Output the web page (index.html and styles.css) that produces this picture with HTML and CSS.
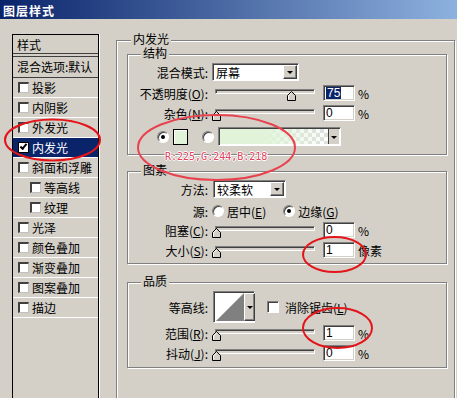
FILE: index.html
```html
<!DOCTYPE html>
<html lang="zh-CN">
<head>
    <meta charset="UTF-8">
    <meta name="viewport" content="width=device-width, initial-scale=1.0">
    <title>图层样式</title>
    <link rel="stylesheet" href="styles.css">
</head>
<body>
<div class="dialog">
    <div class="titlebar">图层样式</div>

    <div class="main">
        <!-- lista de estilos -->
        <div class="style-list">
            <div class="list-head">样式</div>
            <div class="list-blend">混合选项:默认</div>
            <div class="list-item"><span class="chk"></span>投影</div>
            <div class="list-item"><span class="chk"></span>内阴影</div>
            <div class="list-item"><span class="chk"></span>外发光</div>
            <div class="list-item selected"><span class="chk checked"></span>内发光</div>
            <div class="list-item"><span class="chk"></span>斜面和浮雕</div>
            <div class="list-item sub"><span class="chk"></span>等高线</div>
            <div class="list-item sub"><span class="chk"></span>纹理</div>
            <div class="list-item"><span class="chk"></span>光泽</div>
            <div class="list-item"><span class="chk"></span>颜色叠加</div>
            <div class="list-item"><span class="chk"></span>渐变叠加</div>
            <div class="list-item"><span class="chk"></span>图案叠加</div>
            <div class="list-item"><span class="chk"></span>描边</div>
        </div>

        <div class="group outer">
            <span class="group-label">内发光</span>

            <!-- 结构 -->
            <div class="group inner g-struct">
                <span class="group-label">结构</span>
                <div class="row tall first">
                    <label class="lbl">混合模式:</label>
                    <div class="select blend">
                        <span class="select-text">屏幕</span>
                        <span class="drop"></span>
                    </div>
                </div>
                <div class="row">
                    <label class="lbl">不透明度(<u>O</u>):</label>
                    <div class="slider">
                        <div class="track"></div>
                        <svg class="thumb" style="left:75px" width="9" height="10" viewBox="0 0 9 10"><path d="M0.5 9.5V4.5L4.5 0.5L8.5 4.5V9.5Z" fill="#d4d0c8" stroke="#000"/><path d="M1.5 8.5V4.9L4.5 1.9" fill="none" stroke="#fff"/></svg>
                    </div>
                    <div class="num"><span class="sel">75</span></div>
                    <span class="unit">%</span>
                </div>
                <div class="row">
                    <label class="lbl">杂色(<u>N</u>):</label>
                    <div class="slider">
                        <div class="track"></div>
                        <svg class="thumb" style="left:0px" width="9" height="10" viewBox="0 0 9 10"><path d="M0.5 9.5V4.5L4.5 0.5L8.5 4.5V9.5Z" fill="#d4d0c8" stroke="#000"/><path d="M1.5 8.5V4.9L4.5 1.9" fill="none" stroke="#fff"/></svg>
                    </div>
                    <div class="num">0</div>
                    <span class="unit">%</span>
                </div>
                <div class="row color-row">
                    <span class="radio on"></span>
                    <span class="swatch"></span>
                    <span class="radio gap"></span>
                    <div class="gradient">
                        <span class="gradient-fill"></span>
                        <span class="drop flat"></span>
                    </div>
                </div>
            </div>

            <!-- 图素 -->
            <div class="group inner g-elem">
                <span class="group-label">图素</span>
                <div class="row tall first">
                    <label class="lbl">方法:</label>
                    <div class="select method">
                        <span class="select-text">较柔软</span>
                        <span class="drop"></span>
                    </div>
                </div>
                <div class="row r-source">
                    <label class="lbl">源:</label>
                    <span class="radio"></span>
                    <span class="opt">居中(<u>E</u>)</span>
                    <span class="radio on gap2"></span>
                    <span class="opt">边缘(<u>G</u>)</span>
                </div>
                <div class="row r-choke">
                    <label class="lbl">阻塞(<u>C</u>):</label>
                    <div class="slider">
                        <div class="track"></div>
                        <svg class="thumb" style="left:0px" width="9" height="10" viewBox="0 0 9 10"><path d="M0.5 9.5V4.5L4.5 0.5L8.5 4.5V9.5Z" fill="#d4d0c8" stroke="#000"/><path d="M1.5 8.5V4.9L4.5 1.9" fill="none" stroke="#fff"/></svg>
                    </div>
                    <div class="num">0</div>
                    <span class="unit">%</span>
                </div>
                <div class="row">
                    <label class="lbl">大小(<u>S</u>):</label>
                    <div class="slider">
                        <div class="track"></div>
                        <svg class="thumb" style="left:0px" width="9" height="10" viewBox="0 0 9 10"><path d="M0.5 9.5V4.5L4.5 0.5L8.5 4.5V9.5Z" fill="#d4d0c8" stroke="#000"/><path d="M1.5 8.5V4.9L4.5 1.9" fill="none" stroke="#fff"/></svg>
                    </div>
                    <div class="num">1</div>
                    <span class="unit">像素</span>
                </div>
            </div>

            <!-- 品质 -->
            <div class="group inner g-quality">
                <span class="group-label">品质</span>
                <div class="row contour-row first">
                    <label class="lbl">等高线:</label>
                    <div class="contour">
                        <svg class="contour-preview" width="29" height="28" viewBox="0 0 29 28"><rect width="29" height="28" fill="#fff"/><path d="M1 28L29 0V28Z" fill="#808080"/></svg>
                        <span class="drop tall-drop"></span>
                    </div>
                    <span class="box"></span>
                    <span class="opt">消除锯齿(<u>L</u>)</span>
                </div>
                <div class="row r-range">
                    <label class="lbl">范围(<u>R</u>):</label>
                    <div class="slider">
                        <div class="track"></div>
                        <svg class="thumb" style="left:0px" width="9" height="10" viewBox="0 0 9 10"><path d="M0.5 9.5V4.5L4.5 0.5L8.5 4.5V9.5Z" fill="#d4d0c8" stroke="#000"/><path d="M1.5 8.5V4.9L4.5 1.9" fill="none" stroke="#fff"/></svg>
                    </div>
                    <div class="num">1</div>
                    <span class="unit">%</span>
                </div>
                <div class="row">
                    <label class="lbl">抖动(<u>J</u>):</label>
                    <div class="slider">
                        <div class="track"></div>
                        <svg class="thumb" style="left:0px" width="9" height="10" viewBox="0 0 9 10"><path d="M0.5 9.5V4.5L4.5 0.5L8.5 4.5V9.5Z" fill="#d4d0c8" stroke="#000"/><path d="M1.5 8.5V4.9L4.5 1.9" fill="none" stroke="#fff"/></svg>
                    </div>
                    <div class="num">0</div>
                    <span class="unit">%</span>
                </div>
            </div>
        </div>
    </div>

    <!-- anotaciones en rojo -->
    <svg class="annot" width="457" height="398" viewBox="0 0 457 398">
        <ellipse cx="52.5" cy="140" rx="47.5" ry="20.5" fill="none" stroke="#e3151a" stroke-width="2"/>
        <ellipse cx="216.5" cy="147.5" rx="78.5" ry="32.5" fill="none" stroke="#e8424f" stroke-width="2"/>
        <ellipse cx="334.5" cy="254.5" rx="31.5" ry="17.5" fill="none" stroke="#e3151a" stroke-width="2"/>
        <ellipse cx="337.5" cy="328" rx="34.5" ry="20" fill="none" stroke="#e3151a" stroke-width="2"/>
    </svg>
    <div class="rgb-note">R:225,G:244,B:218</div>
</div>
</body>
</html>
```

FILE: styles.css
```css
body {
    margin: 0;
    background-color: #d4d0c8;
    font-family: "Noto Sans CJK SC", sans-serif;
    font-size: 12px;
    color: #000;
    overflow: hidden;
}
.dialog {
    position: relative;
    width: 457px;
    height: 398px;
    overflow: hidden;
}
.titlebar {
    height: 19px;
    line-height: 21px;
    padding-left: 3px;
    color: #fff;
    font-weight: bold;
    letter-spacing: 1px;
    background: linear-gradient(to right, #0a246a, #8db1df);
}
.main {
    display: flex;
    align-items: flex-start;
    padding: 15px 0 0 12px;
}

/* lista */
.style-list {
    flex: none;
    width: 87px;
    height: 380px;
    box-sizing: border-box;
    border: 1px solid #000;
    box-shadow: 1px 0 0 #fff;
}
.list-head {
    height: 18px;
    line-height: 19px;
    padding-left: 4px;
    border-bottom: 4px double #404040;
}
.list-blend {
    height: 20px;
    line-height: 20px;
    padding-left: 4px;
    border-bottom: 1px solid #404040;
}
.list-item {
    display: flex;
    align-items: center;
    height: 19px;
    padding-left: 5px;
    border-bottom: 1px solid #fff;
}
.list-item.sub {
    padding-left: 17px;
}
.list-item.selected {
    background-color: #0a246a;
    color: #fff;
}
.chk {
    position: relative;
    flex: none;
    width: 11px;
    height: 11px;
    box-sizing: border-box;
    margin-right: 3px;
    background: #fff;
    border-style: solid;
    border-width: 2px 1px 1px 2px;
    border-color: #404040 #c0c0c0 #c0c0c0 #404040;
}
.chk.checked {
    border: 1px solid #000;
}
.chk.checked::after {
    content: "";
    position: absolute;
    left: 1px;
    top: 1px;
    width: 5px;
    height: 2px;
    border-left: 2px solid #000;
    border-bottom: 2px solid #000;
    transform: rotate(-50deg);
}

/* grupos */
.group {
    position: relative;
    box-sizing: border-box;
    border: 1px solid #808080;
    box-shadow: 1px 1px 0 #fff, inset 1px 1px 0 #fff;
}
.group-label {
    position: absolute;
    top: -7px;
    left: 13px;
    padding: 0 2px;
    font-family: "Liberation Sans", "Noto Sans CJK SC", sans-serif;
    line-height: 12px;
    background: #d4d0c8;
}
.outer {
    flex: none;
    width: 339px;
    height: 380px;
    margin: 6px 0 0 17px;
    padding: 13px 0 0 10px;
}
.outer > .group-label {
    left: 14px;
}
.inner {
    width: 320px;
    padding-top: 8px;
}
.g-struct {
    height: 101px;
}
.g-elem {
    height: 93px;
    margin-top: 16px;
}
.g-quality {
    height: 86px;
    margin-top: 18px;
}

/* filas */
.row {
    display: flex;
    align-items: center;
    height: 16px;
    margin-top: 4px;
}
.row.first {
    margin-top: 0;
}
.row.tall {
    height: 18px;
}
.lbl {
    flex: none;
    width: 80px;
    margin-right: 4px;
    text-align: right;
    white-space: nowrap;
}
.lbl u, .opt u {
    text-decoration-thickness: 1px;
}
.r-source {
    margin-top: 5px;
}
.r-choke {
    margin-top: 3px;
}
.r-range {
    margin-top: 2px;
}
.contour-row {
    height: 32px;
}
.color-row {
    height: 19px;
    margin-top: 6px;
    padding-left: 29px;
}

/* controles */
.select {
    display: flex;
    box-sizing: border-box;
    height: 18px;
    padding: 1px;
    background: #fff;
    border: 1px solid;
    border-color: #808080 #fff #fff #808080;
    box-shadow: inset 1px 1px 0 #404040;
}
.select.blend {
    width: 87px;
}
.select.method {
    width: 73px;
    margin-left: 1px;
}
.select-text {
    flex: 1;
    padding-left: 2px;
    line-height: 15px;
}
.drop {
    position: relative;
    flex: none;
    width: 14px;
    box-sizing: border-box;
    background: #d4d0c8;
    border: 1px solid;
    border-color: #fff #404040 #404040 #fff;
    box-shadow: inset -1px -1px 0 #808080;
}
.drop::after {
    content: "";
    position: absolute;
    left: 3px;
    top: 5px;
    border-left: 3px solid transparent;
    border-right: 3px solid transparent;
    border-top: 3px solid #000;
}
.drop.flat {
    width: 11px;
    border: none;
    border-left: 1px solid #404040;
    box-shadow: none;
}
.drop.flat::after {
    left: 2px;
    top: 7px;
}
.drop.tall-drop {
    width: 11px;
}
.drop.tall-drop::after {
    left: 2px;
    top: 12px;
}

.slider {
    position: relative;
    flex: none;
    width: 107px;
    height: 16px;
}
.track {
    box-sizing: border-box;
    width: 100px;
    height: 5px;
    margin: 4px 0 0 3px;
    background: #d4d0c8;
    border: 1px solid;
    border-color: #808080 #fff #fff #808080;
    box-shadow: inset 1px 1px 0 #404040;
}
.thumb {
    position: absolute;
    top: 6px;
    display: block;
}
.num {
    flex: none;
    box-sizing: border-box;
    width: 32px;
    height: 16px;
    margin-left: 4px;
    padding: 1px 0 0 2px;
    background: #fff;
    border: 1px solid;
    border-color: #808080 #fff #fff #808080;
    box-shadow: inset 1px 1px 0 #404040, inset -1px -1px 0 #d4d0c8;
    font-family: "Liberation Sans", sans-serif;
    line-height: 12px;
}
.sel {
    display: inline-block;
    padding: 0 1px;
    background: #0a246a;
    color: #fff;
}
.unit {
    margin-left: 3px;
}

.radio {
    position: relative;
    flex: none;
    width: 12px;
    height: 12px;
    box-sizing: border-box;
    border-radius: 50%;
    background: #fff;
    border: 1px solid;
    border-color: #808080 #fff #fff #808080;
    box-shadow: inset 1px 1px 0 #404040;
}
.radio.on::after {
    content: "";
    position: absolute;
    left: 3px;
    top: 3px;
    width: 4px;
    height: 4px;
    border-radius: 50%;
    background: #000;
}
.radio.gap {
    margin-left: 14px;
}
.radio.gap2 {
    margin-left: 17px;
}
.opt {
    margin-left: 3px;
    white-space: nowrap;
}
.swatch {
    flex: none;
    width: 15px;
    height: 16px;
    box-sizing: border-box;
    margin-left: 4px;
    background: #e1f4da;
    border: 1px solid #000;
    box-shadow: inset 1px 1px 0 #fff;
}
.gradient {
    display: flex;
    flex: none;
    width: 123px;
    height: 19px;
    box-sizing: border-box;
    margin-left: 4px;
    padding: 1px;
    border: 1px solid;
    border-color: #808080 #fff #fff #808080;
    box-shadow: inset 1px 1px 0 #404040;
    background: #fff;
}
.gradient-fill {
    flex: 1;
    background:
        linear-gradient(to right, #e1f4da 40%, rgba(225, 244, 218, 0.1) 100%),
        conic-gradient(#ddd 25%, #fff 25% 50%, #ddd 50% 75%, #fff 75%) 0 0 / 8px 8px;
}

.contour {
    display: flex;
    flex: none;
    width: 42px;
    height: 32px;
    box-sizing: border-box;
    margin-left: 1px;
    padding: 1px;
    border: 1px solid;
    border-color: #808080 #fff #fff #808080;
    box-shadow: inset 1px 1px 0 #404040;
    background: #fff;
}
.contour-preview {
    display: block;
    flex: none;
}
.box {
    flex: none;
    width: 12px;
    height: 12px;
    box-sizing: border-box;
    margin-left: 12px;
    background: #fff;
    border: 1px solid;
    border-color: #808080 #fff #fff #808080;
    box-shadow: inset 1px 1px 0 #404040;
}
.box + .opt {
    margin-left: 6px;
}

/* anotaciones */
.annot {
    position: absolute;
    left: 0;
    top: 0;
    pointer-events: none;
}
.rgb-note {
    position: absolute;
    left: 165px;
    top: 151px;
    font-family: "DejaVu Sans Mono", monospace;
    font-size: 10px;
    line-height: 12px;
    color: #e2405c;
    text-shadow: 1px 0 0 #fff, -1px 0 0 #fff, 0 1px 0 #fff, 0 -1px 0 #fff;
}
```
